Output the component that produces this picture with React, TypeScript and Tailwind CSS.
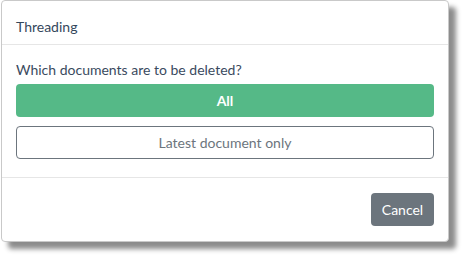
import React from "react";

export default function App() {
  return (
    <div className="w-[465px] h-[257px] bg-white relative overflow-hidden" style={{ fontFamily: 'Lato, "Open Sans", sans-serif' }}>
      <div className="ml-[1px] w-[448px] h-[242px] bg-white border border-[#c9c9c9] rounded-[4px] shadow-[7px_7px_5px_rgba(0,0,0,0.45)] flex flex-col">
        <div className="h-[44px] px-[14px] pt-[8px] flex items-center border-b border-[#e6e6e6] text-[14px] text-[#34475c]">
          Threading
        </div>
        <div className="px-[14px] pt-[14px] pb-[18px] border-b border-[#e6e6e6] flex flex-col">
          <div className="h-[21px] leading-[21px] text-[14px] text-[#3a4a5e]">Which documents are to be deleted?</div>
          <button className="mt-[4px] h-[33px] w-full rounded-[4px] bg-[#55b987] text-white text-[14px] font-bold">All</button>
          <button className="mt-[9px] h-[33px] w-full rounded-[4px] border border-[#6c757d] bg-white text-[#6c757d] text-[14px]">Latest document only</button>
        </div>
        <div className="flex-1 px-[14px] flex items-center justify-end">
          <button className="h-[33px] w-[63px] rounded-[4px] bg-[#6c757d] text-white text-[14px]">Cancel</button>
        </div>
      </div>
    </div>
  );
}
